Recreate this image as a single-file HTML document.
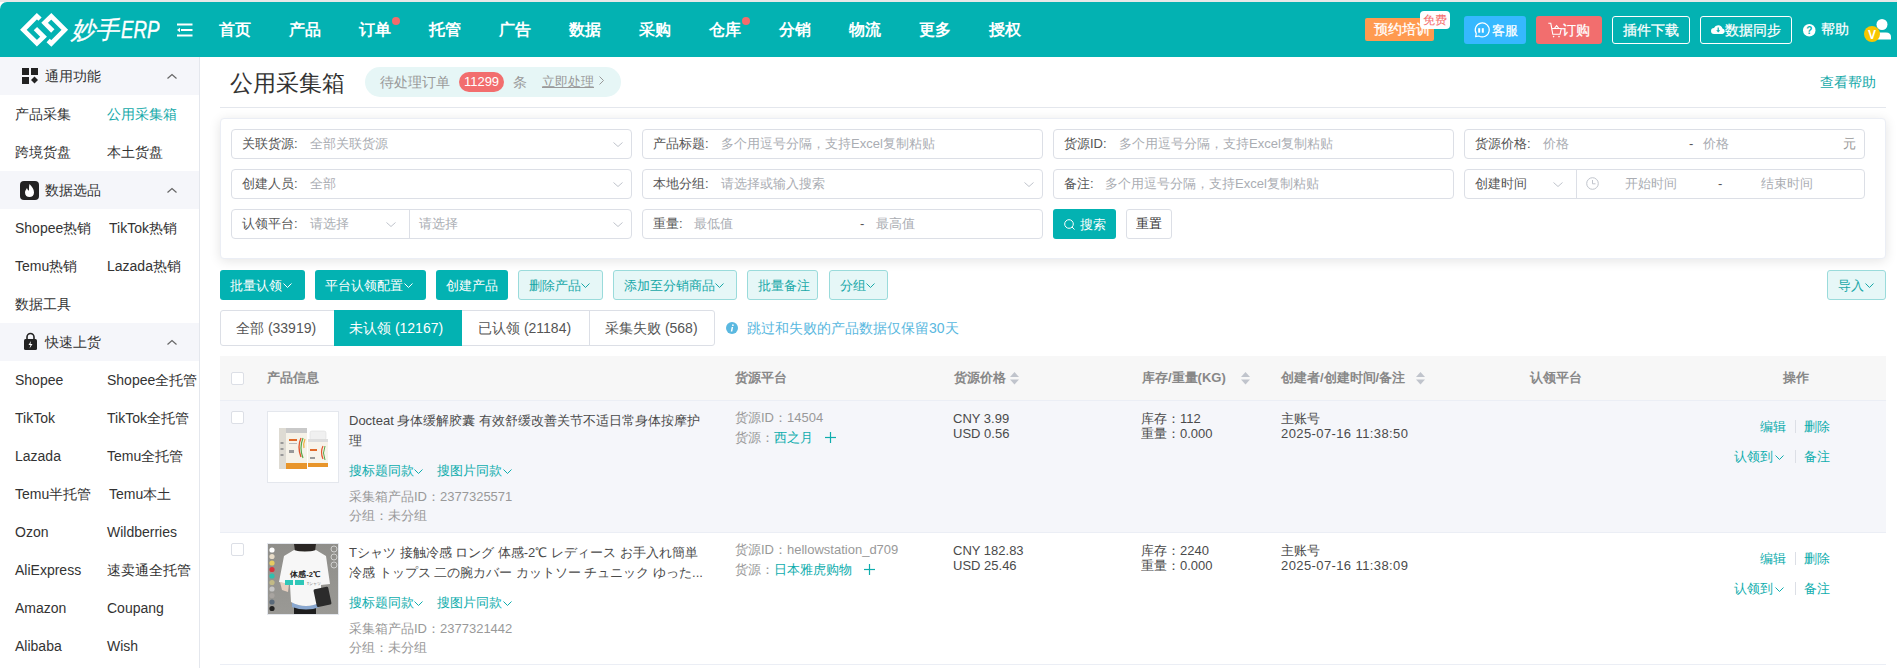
<!DOCTYPE html>
<html><head><meta charset="utf-8"><style>
*{box-sizing:border-box;margin:0;padding:0}
html,body{width:1897px;height:668px;overflow:hidden;background:#fff;font-family:"Liberation Sans",sans-serif;color:#333;font-size:13px}
.a{position:absolute;white-space:nowrap}
.nav{position:absolute;top:2px;height:55px;line-height:55px;color:#fff;font-size:16px;font-weight:bold}
.dot{position:absolute;width:8px;height:8px;border-radius:4px;background:#f56c6c}
.sh{position:absolute;left:0;width:199px;height:38px;background:#f5f6fa}
.st{position:absolute;left:45px;line-height:38px;font-size:14px;color:#333}
.si{position:absolute;font-size:14px;line-height:38px;color:#333;white-space:nowrap}
.inp{position:absolute;height:30px;border:1px solid #dcdfe6;border-radius:4px;background:#fff}
.lbl{position:absolute;top:0;line-height:28px;font-size:13px;color:#555;white-space:nowrap}
.ph{position:absolute;top:0;line-height:28px;font-size:13px;color:#aaadb3;white-space:nowrap}
.btn{position:absolute;top:270px;height:30px;line-height:32px;border-radius:3px;font-size:13px;white-space:nowrap}
.bp{background:#03b2b2;color:#fff}
.bl{background:#e6f7f7;border:1px solid #9adbdb;color:#18a8a8;line-height:30px}
.th{position:absolute;top:356px;line-height:44px;font-size:13px;font-weight:bold;color:#888;white-space:nowrap}
.cb{position:absolute;width:13px;height:13px;border:1px solid #dcdfe6;border-radius:2px;background:#fff}
.t{position:absolute;font-size:13px;line-height:20px;white-space:nowrap;color:#333}
.g{color:#999}
.tl{color:#0eadad}
svg{position:absolute;overflow:visible}
</style></head><body>
<div class="a" style="left:0;top:0;width:1897px;height:2px;background:#e8e8e8"></div>
<div class="a" style="left:0;top:2px;width:1897px;height:55px;background:#03b2b2;border-top-left-radius:7px"></div>
<svg style="left:0;top:0" width="80" height="60"><polyline points="40.05,19.15 36.90,16.20 23.40,29.80 36.90,43.20 43.60,36.80 35.40,28.60" fill="none" stroke="#fff" stroke-width="4.7" stroke-linejoin="miter"/><polyline points="48.15,40.45 51.30,43.40 64.80,29.80 51.30,16.40 44.60,22.80 52.80,31.00" fill="none" stroke="#fff" stroke-width="4.7" stroke-linejoin="miter"/></svg>
<div class="a" style="left:71px;top:15px;font-size:24px;line-height:30px;color:#fff;font-style:italic;-webkit-text-stroke:0.3px #fff">妙手</div>
<div class="a" style="left:121px;top:15px;font-size:24px;line-height:30px;color:#fff;font-style:italic;transform:scaleX(0.78);transform-origin:0 0;-webkit-text-stroke:0.4px #fff">ERP</div>
<svg style="left:177px;top:23px" width="16" height="14"><rect x="0" y="0.5" width="15.5" height="2" fill="#fff"/><rect x="4" y="6" width="11.5" height="2" fill="#fff"/><rect x="0" y="11.5" width="15.5" height="2" fill="#fff"/><polygon points="0,7 3,4.8 3,9.2" fill="#fff"/></svg>
<div class="nav" style="left:219px">首页</div>
<div class="nav" style="left:289px">产品</div>
<div class="nav" style="left:359px">订单</div>
<div class="nav" style="left:429px">托管</div>
<div class="nav" style="left:499px">广告</div>
<div class="nav" style="left:569px">数据</div>
<div class="nav" style="left:639px">采购</div>
<div class="nav" style="left:709px">仓库</div>
<div class="nav" style="left:779px">分销</div>
<div class="nav" style="left:849px">物流</div>
<div class="nav" style="left:919px">更多</div>
<div class="nav" style="left:989px">授权</div>
<div class="dot" style="left:392px;top:17px"></div>
<div class="dot" style="left:742px;top:17px"></div>
<div class="a" style="-webkit-text-stroke:0.25px #fff;left:1365px;top:18px;width:69px;height:23px;background:#ff9a4f;border-radius:2px;color:#fff;font-size:14px;line-height:23px;padding-left:9px">预约培训</div>
<div class="a" style="left:1420px;top:11px;width:30px;height:18px;background:#fff;border-radius:4px;color:#f56c6c;font-size:12px;line-height:18px;text-align:center">免费</div>
<div class="a" style="-webkit-text-stroke:0.25px #fff;left:1464px;top:16px;width:62px;height:28px;background:#36b8ff;border-radius:3px;color:#fff;font-size:13px;line-height:30px;padding-left:28px">客服</div>
<svg style="left:1474px;top:23px" width="15" height="15"><path d="M1.6,13.6 L2.3,10.6 A7,7 0 1 1 4.8,13 Z" fill="none" stroke="#fff" stroke-width="1.2" stroke-linejoin="round"/><rect x="4.2" y="5.2" width="2" height="4.5" fill="#fff"/><rect x="7.8" y="5.2" width="2" height="4.5" fill="#fff"/></svg>
<div class="a" style="-webkit-text-stroke:0.25px #fff;left:1536px;top:16px;width:66px;height:28px;background:#f26e6e;border-radius:3px;color:#fff;font-size:14px;line-height:28px;padding-left:26px">订购</div>
<svg style="left:1548px;top:22px" width="14" height="16"><polyline points="0.3,1.3 2.8,1.3 4.8,12.3 12,12.3 13.3,6.5 3.6,6.5" fill="none" stroke="#fff" stroke-width="1.1"/><polyline points="6.3,6.5 8.6,3.6 10.9,6.5" fill="none" stroke="#fff" stroke-width="1.1"/><circle cx="5.6" cy="14.6" r="0.8" fill="#fff"/><circle cx="11" cy="14.6" r="0.8" fill="#fff"/></svg>
<div class="a" style="-webkit-text-stroke:0.25px #fff;left:1612px;top:16px;width:78px;height:28px;border:1px solid #fff;border-radius:3px;color:#fff;font-size:14px;line-height:26px;text-align:center">插件下载</div>
<div class="a" style="-webkit-text-stroke:0.25px #fff;left:1700px;top:16px;width:92px;height:28px;border:1px solid #fff;border-radius:3px;color:#fff;font-size:14px;line-height:26px;padding-left:24px">数据同步</div>
<svg style="left:1711px;top:24px" width="14" height="11"><path d="M3,10 A3,3 0 0 1 3,4 A4.5,4.5 0 0 1 11.5,4.5 A2.8,2.8 0 0 1 11.5,10 Z" fill="#fff"/><rect x="6.6" y="3.5" width="1.2" height="3.5" fill="#03b2b2"/><polygon points="5.2,6.3 9.2,6.3 7.2,8.6" fill="#03b2b2"/></svg>
<svg style="left:1803px;top:24px" width="13" height="13"><circle cx="6.25" cy="6.25" r="6.25" fill="#fff"/><text x="6.25" y="10" text-anchor="middle" font-size="10" font-weight="bold" fill="#03b2b2" font-family="Liberation Sans">?</text></svg>
<div class="a" style="left:1821px;top:15px;color:#fff;font-size:14px;line-height:28px;-webkit-text-stroke:0.25px #fff">帮助</div>
<svg style="left:1862px;top:18px" width="35" height="30"><circle cx="20" cy="6.5" r="5.5" fill="#fff"/><path d="M11,19 Q11,14.5 16,14.5 L24,14.5 Q29,14.5 29,19 L29,21.5 L11,21.5 Z" fill="#fff"/><circle cx="10" cy="16" r="8" fill="#f7c600"/><text x="10" y="20.5" text-anchor="middle" font-size="12" font-weight="bold" fill="#fff" font-family="Liberation Sans">V</text></svg>
<div class="a" style="left:0;top:57px;width:200px;height:611px;background:#fff;border-right:1px solid #e4e7ed"></div>
<div class="sh" style="top:57px"></div><div class="st" style="top:57px">通用功能</div>
<svg style="left:167px;top:74px" width="10" height="5"><polyline points="0.5,4.5 5,0.5 9.5,4.5" fill="none" stroke="#666" stroke-width="1.2"/></svg>
<div class="sh" style="top:171px"></div><div class="st" style="top:171px">数据选品</div>
<svg style="left:167px;top:188px" width="10" height="5"><polyline points="0.5,4.5 5,0.5 9.5,4.5" fill="none" stroke="#666" stroke-width="1.2"/></svg>
<div class="sh" style="top:323px"></div><div class="st" style="top:323px">快速上货</div>
<svg style="left:167px;top:340px" width="10" height="5"><polyline points="0.5,4.5 5,0.5 9.5,4.5" fill="none" stroke="#666" stroke-width="1.2"/></svg>
<svg style="left:22px;top:68px" width="16" height="16"><rect x="0" y="0" width="7" height="7" fill="#222"/><rect x="9" y="0" width="7" height="7" fill="#222"/><rect x="0" y="9" width="7" height="7" fill="#222"/><polygon points="12.5,8.5 16,12 12.5,15.5 9,12" fill="#222"/></svg>
<svg style="left:20px;top:181px" width="19" height="19"><rect x="0" y="0" width="19" height="19" rx="4" fill="#222"/><path d="M9.5,3 C12,6 14,8 14,11.5 C14,14.5 12,16 9.5,16 C7,16 5,14.5 5,11.5 C5,9.5 6.5,8 7,7 C7.5,9 8.5,9.5 9,9.5 C9,7 9,5 9.5,3 Z" fill="#fff"/></svg>
<svg style="left:23px;top:333px" width="15" height="17"><path d="M4,6 L4,4 A3.5,3.5 0 0 1 11,4 L11,6" fill="none" stroke="#222" stroke-width="1.6"/><rect x="1" y="6" width="13" height="11" rx="1.5" fill="#222"/><polygon points="8,8 5.5,12 7.5,12 6.5,15.5 9.5,11 7.5,11" fill="#fff"/></svg>
<div class="si" style="left:15px;top:95px;">产品采集</div>
<div class="si" style="left:107px;top:95px;color:#14a9a9;">公用采集箱</div>
<div class="si" style="left:15px;top:133px;">跨境货盘</div>
<div class="si" style="left:107px;top:133px;">本土货盘</div>
<div class="si" style="left:15px;top:209px;">Shopee热销</div>
<div class="si" style="left:109px;top:209px;">TikTok热销</div>
<div class="si" style="left:15px;top:247px;">Temu热销</div>
<div class="si" style="left:107px;top:247px;">Lazada热销</div>
<div class="si" style="left:15px;top:285px;">数据工具</div>
<div class="si" style="left:15px;top:361px;">Shopee</div>
<div class="si" style="left:107px;top:361px;">Shopee全托管</div>
<div class="si" style="left:15px;top:399px;">TikTok</div>
<div class="si" style="left:107px;top:399px;">TikTok全托管</div>
<div class="si" style="left:15px;top:437px;">Lazada</div>
<div class="si" style="left:107px;top:437px;">Temu全托管</div>
<div class="si" style="left:15px;top:475px;">Temu半托管</div>
<div class="si" style="left:109px;top:475px;">Temu本土</div>
<div class="si" style="left:15px;top:513px;">Ozon</div>
<div class="si" style="left:107px;top:513px;">Wildberries</div>
<div class="si" style="left:15px;top:551px;">AliExpress</div>
<div class="si" style="left:107px;top:551px;">速卖通全托管</div>
<div class="si" style="left:15px;top:589px;">Amazon</div>
<div class="si" style="left:107px;top:589px;">Coupang</div>
<div class="si" style="left:15px;top:627px;">Alibaba</div>
<div class="si" style="left:107px;top:627px;">Wish</div>
<div class="a" style="left:230px;top:68px;font-size:23px;line-height:30px;color:#333">公用采集箱</div>
<div class="a" style="left:365px;top:67px;width:256px;height:30px;border-radius:15px;background:#e6f6f6"></div>
<div class="a" style="left:380px;top:67px;font-size:14px;line-height:30px;color:#999">待处理订单</div>
<div class="a" style="left:459px;top:72px;width:45px;height:20px;border-radius:10px;background:#f26e6e;color:#fff;font-size:13px;line-height:20px;text-align:center">11299</div>
<div class="a" style="left:513px;top:67px;font-size:14px;line-height:30px;color:#999">条</div>
<div class="a" style="left:542px;top:67px;font-size:13px;line-height:30px;color:#999;text-decoration:underline">立即处理 </div>
<svg style="left:599px;top:76px" width="5" height="9"><polyline points="0.5,0.5 4.5,4.5 0.5,8.5" fill="none" stroke="#999" stroke-width="1"/></svg>
<div class="a" style="left:1820px;top:67px;font-size:14px;line-height:30px;color:#14a9a9">查看帮助</div>
<div class="a" style="left:220px;top:107px;width:1666px;height:1px;background:#e4e7ed"></div>
<div class="a" style="left:220px;top:118px;width:1666px;height:141px;background:#fff;border:1px solid #ebeef5;border-radius:4px;box-shadow:0 2px 12px rgba(0,0,0,0.11)"></div>
<div class="inp" style="left:231px;top:129px;width:401px"><div class="lbl" style="left:10px">关联货源:</div><div class="ph" style="left:78px">全部关联货源</div></div><svg style="left:613px;top:142px" width="10" height="5"><polyline points="0.5,0.5 5.0,4.5 9.5,0.5" fill="none" stroke="#c0c4cc" stroke-width="1"/></svg>
<div class="inp" style="left:642px;top:129px;width:401px"><div class="lbl" style="left:10px">产品标题:</div><div class="ph" style="left:78px">多个用逗号分隔，支持Excel复制粘贴</div></div>
<div class="inp" style="left:1053px;top:129px;width:401px"><div class="lbl" style="left:10px">货源ID:</div><div class="ph" style="left:65px">多个用逗号分隔，支持Excel复制粘贴</div></div>
<div class="inp" style="left:1464px;top:129px;width:401px"><div class="lbl" style="left:10px">货源价格:</div><div class="ph" style="left:78px">价格</div><div class="ph" style="left:224px;color:#555">-</div><div class="ph" style="left:238px">价格</div><div class="ph" style="left:378px;color:#999">元</div></div>
<div class="inp" style="left:231px;top:169px;width:401px"><div class="lbl" style="left:10px">创建人员:</div><div class="ph" style="left:78px">全部</div></div><svg style="left:613px;top:182px" width="10" height="5"><polyline points="0.5,0.5 5.0,4.5 9.5,0.5" fill="none" stroke="#c0c4cc" stroke-width="1"/></svg>
<div class="inp" style="left:642px;top:169px;width:401px"><div class="lbl" style="left:10px">本地分组:</div><div class="ph" style="left:78px">请选择或输入搜索</div></div><svg style="left:1024px;top:182px" width="10" height="5"><polyline points="0.5,0.5 5.0,4.5 9.5,0.5" fill="none" stroke="#c0c4cc" stroke-width="1"/></svg>
<div class="inp" style="left:1053px;top:169px;width:401px"><div class="lbl" style="left:10px">备注:</div><div class="ph" style="left:51px">多个用逗号分隔，支持Excel复制粘贴</div></div>
<div class="inp" style="left:1464px;top:169px;width:401px"><div class="lbl" style="left:10px">创建时间</div><div class="a" style="left:111px;top:0;width:1px;height:28px;background:#dcdfe6"></div><div class="ph" style="left:160px">开始时间</div><div class="ph" style="left:253px;color:#555">-</div><div class="ph" style="left:296px">结束时间</div></div>
<svg style="left:1553px;top:182px" width="10" height="5"><polyline points="0.5,0.5 5.0,4.5 9.5,0.5" fill="none" stroke="#c0c4cc" stroke-width="1"/></svg>
<svg style="left:1586px;top:177px" width="13" height="13"><circle cx="6.5" cy="6.5" r="5.8" fill="none" stroke="#c0c4cc" stroke-width="1"/><polyline points="6.5,3 6.5,6.8 9.5,6.8" fill="none" stroke="#c0c4cc" stroke-width="1"/></svg>
<div class="inp" style="left:231px;top:209px;width:401px"><div class="lbl" style="left:10px">认领平台:</div><div class="ph" style="left:78px">请选择</div><div class="a" style="left:177px;top:0;width:1px;height:28px;background:#dcdfe6"></div><div class="ph" style="left:187px">请选择</div></div>
<svg style="left:386px;top:222px" width="10" height="5"><polyline points="0.5,0.5 5.0,4.5 9.5,0.5" fill="none" stroke="#c0c4cc" stroke-width="1"/></svg>
<svg style="left:613px;top:222px" width="10" height="5"><polyline points="0.5,0.5 5.0,4.5 9.5,0.5" fill="none" stroke="#c0c4cc" stroke-width="1"/></svg>
<div class="inp" style="left:642px;top:209px;width:401px"><div class="lbl" style="left:10px">重量:</div><div class="ph" style="left:51px">最低值</div><div class="ph" style="left:217px;color:#555">-</div><div class="ph" style="left:233px">最高值</div></div>
<div class="a" style="left:1053px;top:209px;width:63px;height:30px;background:#03b2b2;border-radius:3px;color:#fff;font-size:13px;line-height:32px;padding-left:27px">搜索</div>
<svg style="left:1064px;top:219px" width="12" height="12"><circle cx="5" cy="5" r="4.3" fill="none" stroke="#fff" stroke-width="1"/><line x1="8" y1="8" x2="10.5" y2="10.5" stroke="#fff" stroke-width="1"/></svg>
<div class="a" style="left:1126px;top:209px;width:46px;height:30px;border:1px solid #dcdfe6;border-radius:3px;background:#fff;color:#333;font-size:13px;line-height:28px;text-align:center">重置</div>
<div class="btn bp" style="left:220px;width:85px;padding-left:10px">批量认领</div>
<svg style="left:283px;top:283px" width="9" height="5"><polyline points="0.5,0.5 4.5,4.5 8.5,0.5" fill="none" stroke="#fff" stroke-width="1"/></svg>
<div class="btn bp" style="left:315px;width:111px;padding-left:10px">平台认领配置</div>
<svg style="left:404px;top:283px" width="9" height="5"><polyline points="0.5,0.5 4.5,4.5 8.5,0.5" fill="none" stroke="#fff" stroke-width="1"/></svg>
<div class="btn bp" style="left:436px;width:72px;padding-left:10px">创建产品</div>
<div class="btn bl" style="left:518px;width:85px;padding-left:10px">删除产品</div>
<svg style="left:581px;top:283px" width="9" height="5"><polyline points="0.5,0.5 4.5,4.5 8.5,0.5" fill="none" stroke="#18a8a8" stroke-width="1"/></svg>
<div class="btn bl" style="left:613px;width:124px;padding-left:10px">添加至分销商品</div>
<svg style="left:715px;top:283px" width="9" height="5"><polyline points="0.5,0.5 4.5,4.5 8.5,0.5" fill="none" stroke="#18a8a8" stroke-width="1"/></svg>
<div class="btn bl" style="left:747px;width:71px;padding-left:10px">批量备注</div>
<div class="btn bl" style="left:829px;width:59px;padding-left:10px">分组</div>
<svg style="left:866px;top:283px" width="9" height="5"><polyline points="0.5,0.5 4.5,4.5 8.5,0.5" fill="none" stroke="#18a8a8" stroke-width="1"/></svg>
<div class="btn bl" style="left:1827px;width:59px;padding-left:10px">导入</div>
<svg style="left:1865px;top:283px" width="9" height="5"><polyline points="0.5,0.5 4.5,4.5 8.5,0.5" fill="none" stroke="#18a8a8" stroke-width="1"/></svg>
<div class="a" style="left:220px;top:310px;width:495px;height:36px;border:1px solid #dcdfe6;border-radius:3px;background:#fff"></div>
<div class="a" style="left:334px;top:310px;width:128px;height:36px;background:#03b2b2"></div>
<div class="a" style="left:589px;top:311px;width:1px;height:34px;background:#dcdfe6"></div>
<div class="a" style="left:236px;top:310px;line-height:36px;font-size:14px;color:#555">全部 (33919)</div>
<div class="a" style="left:349px;top:310px;line-height:36px;font-size:14px;color:#fff">未认领 (12167)</div>
<div class="a" style="left:478px;top:310px;line-height:36px;font-size:14px;color:#555">已认领 (21184)</div>
<div class="a" style="left:605px;top:310px;line-height:36px;font-size:14px;color:#555">采集失败 (568)</div>
<svg style="left:726px;top:322px" width="12" height="12"><circle cx="6" cy="6" r="6" fill="#5ab8e0"/><polygon points="5.6,5 7.1,5 6.3,9.6 4.8,9.6" fill="#fff"/><circle cx="6.9" cy="3.2" r="0.85" fill="#fff"/></svg>
<div class="a" style="left:747px;top:310px;line-height:36px;font-size:14px;color:#5ab8e0">跳过和失败的产品数据仅保留30天</div>
<div class="a" style="left:220px;top:356px;width:1666px;height:45px;background:#f7f7f7;border-bottom:1px solid #ebeef5"></div>
<div class="cb" style="left:231px;top:372px"></div>
<div class="th" style="left:267px">产品信息</div>
<div class="th" style="left:735px">货源平台</div>
<div class="th" style="left:954px">货源价格</div>
<div class="th" style="left:1142px">库存/重量(KG)</div>
<div class="th" style="left:1281px">创建者/创建时间/备注</div>
<div class="th" style="left:1530px">认领平台</div>
<div class="th" style="left:1783px">操作</div>
<svg style="left:1010px;top:372px" width="9" height="13"><polygon points="4.5,0 9,5 0,5" fill="#c0c4cc"/><polygon points="0,7.5 9,7.5 4.5,12.5" fill="#c0c4cc"/></svg>
<svg style="left:1241px;top:372px" width="9" height="13"><polygon points="4.5,0 9,5 0,5" fill="#c0c4cc"/><polygon points="0,7.5 9,7.5 4.5,12.5" fill="#c0c4cc"/></svg>
<svg style="left:1416px;top:372px" width="9" height="13"><polygon points="4.5,0 9,5 0,5" fill="#c0c4cc"/><polygon points="0,7.5 9,7.5 4.5,12.5" fill="#c0c4cc"/></svg>
<div class="a" style="left:220px;top:401px;width:1666px;height:132px;background:#f5f6fa;border-bottom:1px solid #ebeef5"></div>
<div class="cb" style="left:231px;top:411px"></div>
<div class="a" style="left:267px;top:411px;width:72px;height:72px;border:1px solid #e4e7ed;background:#fff;overflow:hidden"><svg style="left:0;top:0" width="70" height="70"><rect x="11" y="16" width="8" height="41" fill="#dedbd3"/><rect x="12.5" y="30" width="3" height="2" fill="#999"/><rect x="12.5" y="36" width="3" height="2" fill="#999"/><rect x="12.5" y="42" width="3" height="2" fill="#999"/><rect x="18" y="16" width="21" height="41" fill="#f6f2e8"/><rect x="18" y="16" width="21" height="5" fill="#c9c9c9"/><rect x="18" y="51" width="21" height="6" fill="#e8952a"/><rect x="21" y="27" width="8" height="2" fill="#e06a2a"/><rect x="21" y="31" width="8" height="1" fill="#bbb"/><rect x="21" y="38" width="5" height="3" fill="#999"/><path d="M33,26 Q29,35 33,45" stroke="#e2572e" stroke-width="1.4" fill="none"/><path d="M35,26 Q31,36 35,46" stroke="#58a84a" stroke-width="1.2" fill="none"/><path d="M37,27 Q35,32 36,36" stroke="#f0b040" stroke-width="1.2" fill="none"/><rect x="40" y="27" width="20" height="28" rx="2" fill="#f7f3ea"/><rect x="42" y="19" width="16" height="9" rx="2" fill="#f0f0f0" stroke="#ddd" stroke-width="0.6"/><rect x="40" y="27" width="20" height="3" fill="#ddd"/><rect x="40" y="51" width="20" height="4" fill="#e8952a"/><rect x="42" y="37" width="7" height="2" fill="#e06a2a"/><rect x="42" y="45" width="5" height="2" fill="#999"/><path d="M55,34 Q52,40 55,47" stroke="#e2572e" stroke-width="1.2" fill="none"/><path d="M57,34 Q54,41 57,48" stroke="#58a84a" stroke-width="1" fill="none"/></svg></div>
<div class="t" style="left:349px;top:411px;color:#4a4a4a">Docteat 身体缓解胶囊 有效舒缓改善关节不适日常身体按摩护</div>
<div class="t" style="left:349px;top:431px;color:#4a4a4a">理</div>
<div class="t tl" style="left:349px;top:461px">搜标题同款</div>
<svg style="left:414px;top:469px" width="9" height="5"><polyline points="0.5,0.5 4.5,4.5 8.5,0.5" fill="none" stroke="#0eadad" stroke-width="1"/></svg>
<div class="t tl" style="left:437px;top:461px">搜图片同款</div>
<svg style="left:503px;top:469px" width="9" height="5"><polyline points="0.5,0.5 4.5,4.5 8.5,0.5" fill="none" stroke="#0eadad" stroke-width="1"/></svg>
<div class="t g" style="left:349px;top:487px">采集箱产品ID：2377325571</div>
<div class="t g" style="left:349px;top:506px">分组：未分组</div>
<div class="t g" style="left:735px;top:408px">货源ID：14504</div>
<div class="t g" style="left:735px;top:428px">货源：<span class="tl">西之月</span></div>
<div class="t" style="left:953px;top:411px;line-height:15px;color:#4a4a4a">CNY 3.99<br>USD 0.56</div>
<div class="t" style="left:1141px;top:411px;line-height:15px;color:#4a4a4a">库存：112<br>重量：0.000</div>
<div class="t" style="left:1281px;top:411px;line-height:15px;color:#4a4a4a">主账号<br><span style="letter-spacing:0.4px">2025-07-16 11:38:50</span></div>
<div class="t tl" style="left:1760px;top:417px">编辑</div><div class="a" style="left:1795px;top:420px;width:1px;height:13px;background:#dcdfe6"></div><div class="t tl" style="left:1804px;top:417px">删除</div>
<div class="t tl" style="left:1734px;top:447px">认领到</div>
<svg style="left:1775px;top:455px" width="9" height="5"><polyline points="0.5,0.5 4.5,4.5 8.5,0.5" fill="none" stroke="#0eadad" stroke-width="1"/></svg>
<div class="a" style="left:1795px;top:450px;width:1px;height:13px;background:#dcdfe6"></div><div class="t tl" style="left:1804px;top:447px">备注</div>
<div class="a" style="left:220px;top:533px;width:1666px;height:132px;background:#fff;border-bottom:1px solid #ebeef5"></div>
<div class="cb" style="left:231px;top:543px"></div>
<div class="a" style="left:267px;top:543px;width:72px;height:72px;border:1px solid #e4e7ed;background:#fff;overflow:hidden"><svg style="left:0;top:0" width="70" height="70"><defs><linearGradient id="bg2" x1="0" y1="0" x2="0" y2="1"><stop offset="0" stop-color="#8f8e8a"/><stop offset="1" stop-color="#9a9995"/></linearGradient></defs><rect width="70" height="70" fill="url(#bg2)"/><path d="M26,0 L48,0 L47,7 L27,7 Z" fill="#2a2624"/><rect x="26" y="62" width="22" height="8" fill="#1e1e1e"/><path d="M24,58 Q38,66 52,58 L52,63 Q38,68 24,63 Z" fill="#8aa8d0"/><path d="M26,6 Q37,10 48,6 L58,12 L62,40 L53,41 L53,58 Q38,66 23,58 L22,41 L11,38 L16,12 Z" fill="#f7f7f7"/><path d="M12,38 L21,40 L20,48 L14,46 Z" fill="#e6cfc0"/><rect x="47" y="44" width="15" height="18" rx="1.5" transform="rotate(-12 54 53)" fill="#2b2b2b"/><text x="37" y="33" font-size="7.5" font-weight="bold" fill="#222" text-anchor="middle" font-family="Liberation Sans">体感-2℃</text><rect x="17" y="36" width="8" height="5" fill="#2fc7b8"/><rect x="27" y="36" width="9" height="5" fill="#2fc7b8"/><text x="46" y="41" font-size="4" fill="#666" text-anchor="middle" font-family="Liberation Sans">Tシャツ</text><circle cx="4" cy="6" r="2.6" fill="#fff"/><circle cx="4" cy="12.5" r="2.6" fill="#e8dcc8"/><circle cx="4" cy="19" r="2.6" fill="#e6cc62"/><circle cx="4" cy="25.5" r="2.6" fill="#d8343c"/><circle cx="4" cy="32" r="2.6" fill="#2fc0ae"/><circle cx="4" cy="38.5" r="2.6" fill="#c2ba86"/><circle cx="4" cy="45" r="2.6" fill="#c6c6c6"/><circle cx="4" cy="51.5" r="2.6" fill="#a8a4a0"/><circle cx="4" cy="58" r="2.6" fill="#5a6a7a"/><circle cx="4" cy="64.5" r="2.6" fill="#222"/><circle cx="66" cy="5" r="3" fill="none" stroke="#ddd" stroke-width="0.8"/><circle cx="66" cy="13" r="3" fill="none" stroke="#ddd" stroke-width="0.8"/><circle cx="66" cy="21" r="3" fill="none" stroke="#ddd" stroke-width="0.8"/></svg></div>
<div class="t" style="left:349px;top:543px;color:#4a4a4a">Tシャツ 接触冷感 ロング 体感-2℃ レディース お手入れ簡単</div>
<div class="t" style="left:349px;top:563px;color:#4a4a4a">冷感 トップス 二の腕カバー カットソー チュニック ゆった...</div>
<div class="t tl" style="left:349px;top:593px">搜标题同款</div>
<svg style="left:414px;top:601px" width="9" height="5"><polyline points="0.5,0.5 4.5,4.5 8.5,0.5" fill="none" stroke="#0eadad" stroke-width="1"/></svg>
<div class="t tl" style="left:437px;top:593px">搜图片同款</div>
<svg style="left:503px;top:601px" width="9" height="5"><polyline points="0.5,0.5 4.5,4.5 8.5,0.5" fill="none" stroke="#0eadad" stroke-width="1"/></svg>
<div class="t g" style="left:349px;top:619px">采集箱产品ID：2377321442</div>
<div class="t g" style="left:349px;top:638px">分组：未分组</div>
<div class="t g" style="left:735px;top:540px">货源ID：hellowstation_d709</div>
<div class="t g" style="left:735px;top:560px">货源：<span class="tl">日本雅虎购物</span></div>
<div class="t" style="left:953px;top:543px;line-height:15px;color:#4a4a4a">CNY 182.83<br>USD 25.46</div>
<div class="t" style="left:1141px;top:543px;line-height:15px;color:#4a4a4a">库存：2240<br>重量：0.000</div>
<div class="t" style="left:1281px;top:543px;line-height:15px;color:#4a4a4a">主账号<br><span style="letter-spacing:0.4px">2025-07-16 11:38:09</span></div>
<div class="t tl" style="left:1760px;top:549px">编辑</div><div class="a" style="left:1795px;top:552px;width:1px;height:13px;background:#dcdfe6"></div><div class="t tl" style="left:1804px;top:549px">删除</div>
<div class="t tl" style="left:1734px;top:579px">认领到</div>
<svg style="left:1775px;top:587px" width="9" height="5"><polyline points="0.5,0.5 4.5,4.5 8.5,0.5" fill="none" stroke="#0eadad" stroke-width="1"/></svg>
<div class="a" style="left:1795px;top:582px;width:1px;height:13px;background:#dcdfe6"></div><div class="t tl" style="left:1804px;top:579px">备注</div>
<svg style="left:825px;top:432px" width="11" height="11"><line x1="5.5" y1="0" x2="5.5" y2="11" stroke="#0eadad" stroke-width="1.2"/><line x1="0" y1="5.5" x2="11" y2="5.5" stroke="#0eadad" stroke-width="1.2"/></svg>
<svg style="left:864px;top:564px" width="11" height="11"><line x1="5.5" y1="0" x2="5.5" y2="11" stroke="#0eadad" stroke-width="1.2"/><line x1="0" y1="5.5" x2="11" y2="5.5" stroke="#0eadad" stroke-width="1.2"/></svg>
</body></html>
